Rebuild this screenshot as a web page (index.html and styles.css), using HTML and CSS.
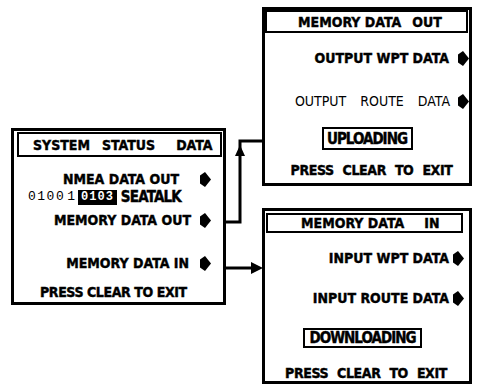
FILE: index.html
```html
<!DOCTYPE html>
<html lang="en">
<head>
    <meta charset="UTF-8">
    <title>Memory Data Menus</title>
    <link rel="stylesheet" href="styles.css">
</head>
<body>
    <div class="canvas">
        <section class="panel sys">
            <div class="head"><span>SYSTEM</span><span>STATUS</span><span class="far">DATA</span></div>
            <div class="row nmea"><span>NMEA DATA OUT</span><svg class="arr" viewBox="0 0 11 15"><path d="M0 3.5L5 0L11 7.5L5 15L0 11.5Z"/></svg></div>
            <div class="row port"><span class="lcd">0100</span><span class="lcd tick">1</span><span class="inv">0103</span><span class="talk">SEATALK</span></div>
            <div class="row mdo"><span>MEMORY DATA OUT</span><svg class="arr" viewBox="0 0 11 15"><path d="M0 3.5L5 0L11 7.5L5 15L0 11.5Z"/></svg></div>
            <div class="row mdi"><span>MEMORY DATA IN</span><svg class="arr" viewBox="0 0 11 15"><path d="M0 3.5L5 0L11 7.5L5 15L0 11.5Z"/></svg></div>
            <div class="row exit">PRESS CLEAR TO EXIT</div>
        </section>

        <section class="panel out">
            <div class="head"><span>MEMORY DATA</span><span class="far">OUT</span></div>
            <div class="row wpt"><span>OUTPUT WPT DATA</span><svg class="arr" viewBox="0 0 11 15"><path d="M0 3.5L5 0L11 7.5L5 15L0 11.5Z"/></svg></div>
            <div class="row route"><span>OUTPUT ROUTE DATA</span><svg class="arr" viewBox="0 0 11 15"><path d="M0 3.5L5 0L11 7.5L5 15L0 11.5Z"/></svg></div>
            <div class="busy">UPLOADING</div>
            <div class="row exit">PRESS CLEAR TO EXIT</div>
        </section>

        <section class="panel in">
            <div class="head"><span>MEMORY DATA</span><span class="far">IN</span></div>
            <div class="row wpt"><span>INPUT WPT DATA</span><svg class="arr" viewBox="0 0 11 15"><path d="M0 3.5L5 0L11 7.5L5 15L0 11.5Z"/></svg></div>
            <div class="row route"><span>INPUT ROUTE DATA</span><svg class="arr" viewBox="0 0 11 15"><path d="M0 3.5L5 0L11 7.5L5 15L0 11.5Z"/></svg></div>
            <div class="busy">DOWNLOADING</div>
            <div class="row exit">PRESS CLEAR TO EXIT</div>
        </section>

        <!-- connectors between the menus -->
        <svg class="links" viewBox="0 0 479 384">
            <path class="wire" d="M224 222H240V141H264"/>
            <path d="M240 145L235 156H245Z"/>
            <path class="wire" d="M225 268H254"/>
            <path d="M263 268L251 262V274Z"/>
        </svg>
    </div>
</body>
</html>
```

FILE: styles.css
```css
* {
    margin: 0;
    padding: 0;
    box-sizing: border-box;
}
body {
    background: #fff;
    color: #000;
    font-family: "DejaVu Sans Condensed", "DejaVu Sans", sans-serif;
    font-weight: bold;
    font-size: 14px;
    -webkit-text-stroke: 0.4px #000;
}
.canvas {
    position: relative;
    width: 479px;
    height: 384px;
    overflow: hidden;
}
.panel {
    position: absolute;
    border: 3px solid #000;
    display: flex;
    flex-direction: column;
}
.sys {
    left: 11px;
    top: 128px;
    width: 215px;
    height: 177px;
}
.out {
    left: 262px;
    top: 7px;
    width: 210px;
    height: 179px;
}
.in {
    left: 262px;
    top: 208px;
    width: 210px;
    height: 176px;
}
.head {
    border: 2px solid #000;
    display: flex;
    align-items: center;
    white-space: pre;
    line-height: 16px;
}
.sys .head {
    margin: 1px 1px 0 3px;
    height: 25px;
    padding-left: 14px;
    gap: 12px;
}
.sys .head .far {
    margin-left: 9px;
}
.out .head {
    margin: 0 1px 0 0;
    height: 23px;
    padding-left: 31px;
}
.out .head .far {
    margin-left: 11px;
}
.in .head {
    margin: 2px 6px 0 1px;
    height: 22px;
    padding-left: 33px;
}
.in .head .far {
    margin-left: 20px;
}
.row {
    display: flex;
    justify-content: flex-end;
    align-items: center;
    height: 16px;
    line-height: 16px;
    white-space: pre;
}
.arr {
    width: 11px;
    height: 15px;
    flex: none;
}
.exit {
    justify-content: center;
    letter-spacing: -0.4px;
}

/* system status */
.sys .row {
    padding-right: 12px;
    gap: 9px;
}
.sys .nmea {
    margin-top: 14px;
    gap: 21px;
}
.sys .port {
    margin-top: 2px;
    justify-content: flex-start;
    padding-left: 14px;
    gap: 0;
}
.lcd {
    font-family: "Liberation Mono", monospace;
    font-weight: normal;
    font-size: 13px;
    letter-spacing: 1.5px;
    -webkit-text-stroke: 0;
}
.tick {
    margin-left: 2px;
    letter-spacing: 0;
}
.inv {
    margin-left: 3px;
    height: 15px;
    line-height: 15px;
    padding: 0 3px;
    background: #000;
    color: #fff;
    font-family: "Liberation Mono", monospace;
    font-size: 12px;
    letter-spacing: 1px;
    -webkit-text-stroke: 0;
}
.talk {
    margin-left: 4px;
    font-size: 15px;
    letter-spacing: -0.8px;
}
.sys .mdo {
    margin-top: 7px;
}
.sys .mdi {
    margin-top: 27px;
    gap: 11px;
}
.sys .exit {
    margin-top: 13px;
    justify-content: flex-start;
    padding-left: 26px;
}

/* memory data out */
.out .row {
    gap: 9px;
}
.out .wpt {
    margin-top: 17px;
}
.out .route {
    margin-top: 27px;
    font-weight: normal;
    word-spacing: 10px;
    gap: 8px;
    -webkit-text-stroke: 0;
}
.busy {
    align-self: center;
    display: flex;
    justify-content: center;
    align-items: center;
    border: 2px solid #000;
    font-size: 15px;
    letter-spacing: -1px;
}
.out .busy {
    margin-top: 18px;
    width: 91px;
    height: 23px;
}
.out .exit {
    margin-top: 12px;
    padding-left: 9px;
    word-spacing: 5px;
}

/* memory data in */
.in .row {
    padding-right: 5px;
    gap: 4px;
}
.in .wpt {
    margin-top: 17px;
}
.in .route {
    margin-top: 24px;
}
.in .busy {
    margin-top: 22px;
    margin-right: 9px;
    width: 119px;
    height: 20px;
}
.in .exit {
    margin-top: 17px;
    padding-left: 3px;
    word-spacing: 5px;
}

.links {
    position: absolute;
    left: 0;
    top: 0;
    width: 479px;
    height: 384px;
    pointer-events: none;
}
.wire {
    fill: none;
    stroke: #000;
    stroke-width: 3;
}
```
